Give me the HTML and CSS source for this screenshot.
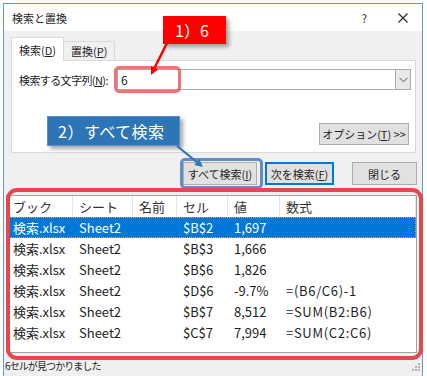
FILE: index.html
```html
<!DOCTYPE html>
<html lang="ja">
<head>
  <meta charset="UTF-8" />
  <title>検索と置換</title>
  <link rel="stylesheet" href="styles.css">
</head>
<body>
  <div class="window">
    <div class="titlebar">
      <span class="title">検索と置換</span>
      <span class="help">?</span>
      <svg class="close-x" width="10" height="10" viewBox="0 0 10 10">
        <path d="M0.5 0.5 L9.5 9.5 M9.5 0.5 L0.5 9.5" stroke="#222" stroke-width="1.1" fill="none"/>
      </svg>
    </div>

    <div class="content">
      <div class="tabs">
        <div class="tab active">検索(<u>D</u>)</div>
        <div class="tab">置換(<u>P</u>)</div>
      </div>

      <div class="panel">
        <div class="find-row">
          <label class="find-label">検索する文字列(<u>N</u>):</label>
          <div class="combo">
            <span class="combo-value">6</span>
            <span class="combo-drop">
              <svg width="9" height="6" viewBox="0 0 9 6">
                <path d="M0.5 0.8 L4.5 4.8 L8.5 0.8" stroke="#555" stroke-width="1" fill="none"/>
              </svg>
            </span>
          </div>
        </div>
        <div class="options-row">
          <button class="btn options-btn">オプション(<u>T</u>) &gt;&gt;</button>
        </div>
      </div>

      <div class="actions">
        <button class="btn find-all">すべて検索(<u>I</u>)</button>
        <button class="btn find-next">次を検索(<u>F</u>)</button>
        <button class="btn close-btn">閉じる</button>
      </div>

      <div class="results">
        <div class="row head">
          <span>ブック</span><span>シート</span><span>名前</span><span>セル</span><span>値</span><span>数式</span>
        </div>
        <div class="row selected">
          <span>検索.xlsx</span><span>Sheet2</span><span></span><span>$B$2</span><span>1,697</span><span></span>
        </div>
        <div class="row">
          <span>検索.xlsx</span><span>Sheet2</span><span></span><span>$B$3</span><span>1,666</span><span></span>
        </div>
        <div class="row">
          <span>検索.xlsx</span><span>Sheet2</span><span></span><span>$B$6</span><span>1,826</span><span></span>
        </div>
        <div class="row">
          <span>検索.xlsx</span><span>Sheet2</span><span></span><span>$D$6</span><span>-9.7%</span><span class="formula">=(B6/C6)-1</span>
        </div>
        <div class="row">
          <span>検索.xlsx</span><span>Sheet2</span><span></span><span>$B$7</span><span>8,512</span><span class="formula">=SUM(B2:B6)</span>
        </div>
        <div class="row">
          <span>検索.xlsx</span><span>Sheet2</span><span></span><span>$C$7</span><span>7,994</span><span class="formula">=SUM(C2:C6)</span>
        </div>
      </div>
    </div>

    <div class="status">
      <span>6セルが見つかりました</span>
      <svg class="grip" width="8" height="8" viewBox="0 0 8 8">
        <rect x="6" y="0" width="2" height="2" fill="#b5b5b5"/>
        <rect x="3" y="3" width="2" height="2" fill="#b5b5b5"/>
        <rect x="6" y="3" width="2" height="2" fill="#b5b5b5"/>
        <rect x="0" y="6" width="2" height="2" fill="#b5b5b5"/>
        <rect x="3" y="6" width="2" height="2" fill="#b5b5b5"/>
        <rect x="6" y="6" width="2" height="2" fill="#b5b5b5"/>
      </svg>
    </div>
  </div>

  <!-- annotation overlays -->
  <div class="mark mark-input"></div>
  <div class="mark mark-button"></div>
  <div class="mark mark-results"></div>

  <div class="callout callout-red">1）6</div>
  <div class="callout callout-blue">2）すべて検索</div>

  <svg class="arrows" width="427" height="376" viewBox="0 0 427 376">
    <line x1="167" y1="43" x2="154.6" y2="67.8" stroke="#f00" stroke-width="2.5"/>
    <polygon points="151,75 158.2,69.6 151,66" fill="#f00"/>
    <line x1="177" y1="146" x2="196.8" y2="162" stroke="#2e75b6" stroke-width="2.2"/>
    <polygon points="203,167 194.3,165.1 199.3,158.9" fill="#2e75b6"/>
  </svg>
</body>
</html>
```

FILE: styles.css
```css
body {
  margin: 0;
  width: 427px;
  height: 376px;
  overflow: hidden;
  position: relative;
  background: #fff;
  font-family: "Noto Sans CJK JP", sans-serif;
  font-size: 11px;
  color: #1e1e1e;
}

u {
  text-decoration: underline;
}

.window {
  margin: 3px 0 0 3px;
  width: 418px;
  height: 380px;
  border: 1px solid #5b9bd5;
  border-bottom: none;
  background: #f0f0f0;
  display: flex;
  flex-direction: column;
}

.titlebar {
  height: 27px;
  flex-shrink: 0;
  background: #fff;
  display: flex;
  align-items: center;
  padding-left: 8px;
  font-size: 11px;
}

.title {
  flex: 1;
}

.help {
  font-size: 11px;
  margin-right: 31px;
}

.close-x {
  margin-right: 14px;
}

.content {
  padding: 6px 5px 0 7px;
  display: flex;
  flex-direction: column;
}

/* tabs */
.tabs {
  display: flex;
  align-items: flex-end;
  height: 23px;
}

.tab {
  box-sizing: border-box;
  height: 19px;
  width: 51px;
  padding-left: 7px;
  border: 1px solid #d9d9d9;
  border-left: none;
  border-bottom: none;
  background: #f0f0f0;
  display: flex;
  align-items: center;
}

.tab.active {
  height: 24px;
  width: 53px;
  margin-bottom: -1px;
  border-left: 1px solid #d9d9d9;
  background: #fff;
  position: relative;
  z-index: 1;
}

.panel {
  box-sizing: border-box;
  height: 93px;
  margin-right: 1px;
  border: 1px solid #d9d9d9;
  background: #fff;
  padding: 8px 4px 0 7px;
}

.find-row {
  display: flex;
  align-items: center;
}

.find-label {
  width: 98px;
  flex-shrink: 0;
  white-space: nowrap;
  letter-spacing: -0.6px;
}

.combo {
  flex: 1;
  height: 21px;
  box-sizing: border-box;
  border: 1px solid #acacac;
  display: flex;
  align-items: center;
}

.combo-value {
  flex: 1;
  padding-left: 3px;
  font-size: 12px;
}

.combo-drop {
  width: 15px;
  height: 19px;
  box-sizing: border-box;
  border-left: 1px solid #acacac;
  background: #e8e8e8;
  display: flex;
  align-items: center;
  justify-content: center;
}

.options-row {
  display: flex;
  justify-content: flex-end;
  margin-top: 33px;
}

/* buttons */
.btn {
  box-sizing: border-box;
  height: 23px;
  padding: 0;
  background: #e1e1e1;
  border: 1px solid #adadad;
  font-family: inherit;
  font-size: 11px;
  color: #1e1e1e;
}

.options-btn {
  width: 90px;
  height: 22px;
  margin-right: 2px;
}

.actions {
  display: flex;
  justify-content: flex-end;
  margin-top: 9px;
}

.find-all {
  width: 74px;
}

.find-next {
  width: 69px;
  margin-left: 8px;
  border: 2px solid #0078d7;
}

.close-btn {
  width: 65px;
  margin-left: 18px;
}

/* result list */
.results {
  box-sizing: border-box;
  height: 158px;
  margin: 10px 0 0 -5px;
  border: 1px solid #a0a0a0;
  background: #fff;
  font-size: 13px;
}

.row {
  display: grid;
  grid-template-columns: 66px 60px 44px 51px 52px 1fr;
  height: 21px;
  align-items: center;
}

.row span {
  padding-left: 6px;
  white-space: nowrap;
  line-height: 21px;
}

.row .formula {
  letter-spacing: 0.7px;
}

.row.head span {
  border-right: 1px solid #e5e5e5;
  color: #333;
}

.row.selected {
  background: #0078d7;
  color: #fff;
  outline: 1px dotted #f0a050;
  outline-offset: -1px;
}

.status {
  display: flex;
  align-items: center;
  height: 18px;
  margin-top: 3px;
  padding: 0 2px 0 1px;
  font-size: 10px;
  letter-spacing: -0.9px;
}

.status span {
  flex: 1;
}

.grip {
  margin-top: 4px;
}

/* annotations */
.mark {
  position: absolute;
  box-sizing: border-box;
  pointer-events: none;
}

.mark-input {
  left: 114px;
  top: 66px;
  width: 67px;
  height: 27px;
  border: 3px solid rgba(235, 70, 70, 0.75);
  border-radius: 5px;
}

.mark-button {
  left: 180px;
  top: 158px;
  width: 83px;
  height: 31px;
  border: 3px solid #5f8ec8;
  border-radius: 5px;
}

.mark-results {
  left: 6px;
  top: 188px;
  width: 417px;
  height: 172px;
  border: 4px solid #e8464e;
  border-radius: 11px;
}

.callout {
  position: absolute;
  box-sizing: border-box;
  display: flex;
  align-items: center;
  color: #fff;
  font-size: 16px;
  box-shadow: 3px 3px 4px rgba(0, 0, 0, 0.35);
}

.callout-red {
  left: 163px;
  top: 16px;
  width: 63px;
  height: 28px;
  padding-left: 12px;
  background: #ff0000;
}

.callout-blue {
  left: 47px;
  top: 116px;
  width: 133px;
  height: 30px;
  padding-left: 10px;
  background: #2e75b6;
  border: 1px solid #5b8fc8;
  letter-spacing: 0.5px;
}

.arrows {
  position: absolute;
  left: 0;
  top: 0;
  pointer-events: none;
}
```
